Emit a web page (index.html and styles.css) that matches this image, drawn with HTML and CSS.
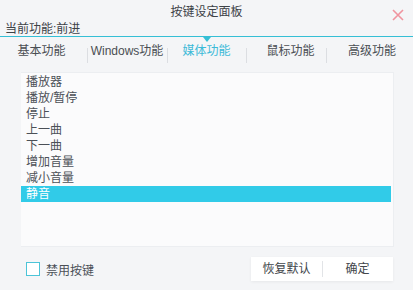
FILE: index.html
```html
<!doctype html>
<html lang="zh-CN">
<head>
    <meta charset="UTF-8">
    <title>按键设定面板</title>
    <link rel="stylesheet" href="styles.css">
</head>
<body>
    <div class="panel">
        <div class="header">
            <div class="title">按键设定面板</div>
            <div class="current">当前功能:前进</div>
            <svg class="close" width="12" height="12" viewBox="0 0 12 12">
                <path d="M1 1 L11 11 M11 1 L1 11" stroke="#f0949f" stroke-width="1.6" fill="none"/>
            </svg>
        </div>

        <div class="tabs">
            <div class="tab first">基本功能</div>
            <div class="tab">Windows功能</div>
            <div class="tab active">媒体功能</div>
            <div class="tab mouse">鼠标功能</div>
            <div class="tab last">高级功能</div>
        </div>

        <div class="list">
            <div class="item">播放器</div>
            <div class="item">播放/暂停</div>
            <div class="item">停止</div>
            <div class="item">上一曲</div>
            <div class="item">下一曲</div>
            <div class="item">增加音量</div>
            <div class="item">减小音量</div>
            <div class="item selected">静音</div>
        </div>

        <div class="footer">
            <label class="check">
                <span class="box"></span>
                禁用按键
            </label>
            <div class="buttons">
                <div class="btn">恢复默认</div>
                <div class="btn">确定</div>
            </div>
        </div>
    </div>
</body>
</html>
```

FILE: styles.css
```css
body {
    margin: 0;
    background-color: #f4f5f7;
    font-family: "Liberation Sans", "Noto Sans CJK SC", sans-serif;
    font-size: 12px;
    color: #4b5057;
}

.panel {
    width: 413px;
    height: 290px;
    display: flex;
    flex-direction: column;
}

.header {
    position: relative;
    height: 36px;
    border-bottom: 1px solid #35bfd5;
}

.title {
    text-align: center;
    padding-top: 2px;
    line-height: 20px;
    color: #3d4247;
}

.current {
    padding-left: 5px;
    line-height: 14px;
    color: #3d4247;
}

.close {
    position: absolute;
    top: 9px;
    right: 9px;
}

.tabs {
    display: grid;
    grid-template-columns: 87px 80px 79px 80px 1fr;
    height: 28px;
    margin-bottom: 7px;
}

.tab {
    position: relative;
    text-align: center;
    line-height: 28px;
    color: #4a4e53;
}

.tab.first {
    padding-right: 4px;
}

.tab.mouse {
    padding-left: 9px;
}

.tab.last {
    padding-left: 5px;
}

.tab + .tab::after {
    content: "";
    position: absolute;
    left: 0;
    top: 11px;
    height: 15px;
    border-left: 1px solid #dcdee2;
}

.tab.active {
    color: #3bbad8;
}

.tab.active::before {
    content: "";
    position: absolute;
    top: 0;
    left: 50%;
    margin-left: -4px;
    border-left: 4px solid transparent;
    border-right: 4px solid transparent;
    border-top: 5px solid #35bfd5;
}

.list {
    margin-left: 21px;
    width: 370px;
    height: 171px;
    padding: 1px 2px 1px 0;
    background-color: #fbfbfc;
    border: 1px solid #eceef1;
    border-left: none;
}

.item {
    padding-left: 5px;
    height: 16px;
    line-height: 16px;
    color: #4b5057;
}

.item.selected {
    background-color: #31cbe8;
    color: #ffffff;
}

.footer {
    display: flex;
    align-items: center;
    justify-content: space-between;
    padding: 10px 20px 0 26px;
}

.check {
    display: flex;
    align-items: center;
    gap: 6px;
    color: #4b5057;
}

.box {
    width: 12px;
    height: 12px;
    border: 1.5px solid #4cc4d8;
    background-color: #ffffff;
}

.buttons {
    display: flex;
    align-items: center;
    background-color: #ffffff;
    height: 24px;
    box-shadow: 0 1px 3px rgba(0, 0, 0, 0.06);
}

.btn {
    position: relative;
    width: 71px;
    text-align: center;
    line-height: 24px;
    color: #42464b;
}

.btn + .btn::before {
    content: "";
    position: absolute;
    left: 0;
    top: 4px;
    height: 16px;
    border-left: 1px solid #e2e4e7;
}
```
